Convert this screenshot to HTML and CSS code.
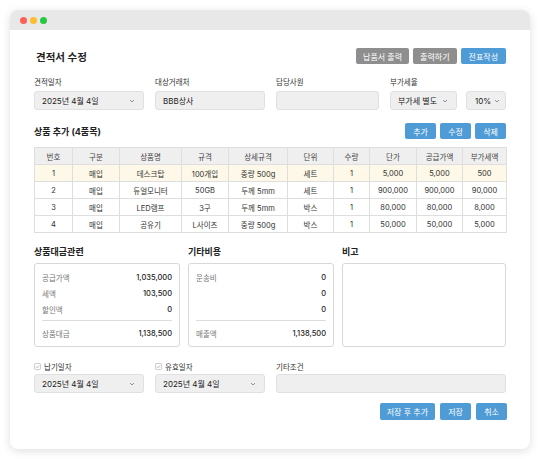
FILE: index.html
```html
<!DOCTYPE html>
<html lang="ko">
  <head>
    <meta charset="UTF-8" />
    <meta name="viewport" content="width=device-width, initial-scale=1.0" />
    <title>견적서 수정</title>
    <link rel="stylesheet" href="styles.css">
  </head>
  <body>
    <div class="window">
      <div class="titlebar">
        <span class="light red"></span>
        <span class="light yellow"></span>
        <span class="light green"></span>
      </div>

      <div class="content">
        <div class="head-row">
          <h1>견적서 수정</h1>
          <div class="btns">
            <button class="btn gray">납품서 출력</button>
            <button class="btn gray">출력하기</button>
            <button class="btn blue">전표작성</button>
          </div>
        </div>

        <div class="fields">
          <div class="field">
            <label>견적일자</label>
            <div class="input select">2025년 4월 4일<svg class="chev" viewBox="0 0 6 4"><path d="M1 1l2 2 2-2" /></svg></div>
          </div>
          <div class="field">
            <label>대상거래처</label>
            <div class="input">BBB상사</div>
          </div>
          <div class="field">
            <label>담당사원</label>
            <div class="input"></div>
          </div>
          <div class="field">
            <label>부가세율</label>
            <div class="vat">
              <div class="input select">부가세 별도<svg class="chev" viewBox="0 0 6 4"><path d="M1 1l2 2 2-2" /></svg></div>
              <div class="input select">10%<svg class="chev" viewBox="0 0 6 4"><path d="M1 1l2 2 2-2" /></svg></div>
            </div>
          </div>
        </div>

        <div class="section-row">
          <h2>상품 추가 (4품목)</h2>
          <div class="btns">
            <button class="btn blue">추가</button>
            <button class="btn blue">수정</button>
            <button class="btn blue">삭제</button>
          </div>
        </div>

        <table class="items">
          <colgroup>
            <col style="width:38px"><col style="width:47px"><col style="width:62px"><col style="width:47px"><col style="width:59px">
            <col style="width:46px"><col style="width:36px"><col style="width:47px"><col style="width:46px"><col>
          </colgroup>
          <thead>
            <tr><th>번호</th><th>구분</th><th>상품명</th><th>규격</th><th>상세규격</th><th>단위</th><th>수량</th><th>단가</th><th>공급가액</th><th>부가세액</th></tr>
          </thead>
          <tbody>
            <tr class="selected"><td>1</td><td>매입</td><td>데스크탑</td><td>100개입</td><td>중량 500g</td><td>세트</td><td>1</td><td>5,000</td><td>5,000</td><td>500</td></tr>
            <tr><td>2</td><td>매입</td><td>듀얼모니터</td><td>50GB</td><td>두께 5mm</td><td>세트</td><td>1</td><td>900,000</td><td>900,000</td><td>90,000</td></tr>
            <tr><td>3</td><td>매입</td><td>LED램프</td><td>3구</td><td>두께 5mm</td><td>박스</td><td>1</td><td>80,000</td><td>80,000</td><td>8,000</td></tr>
            <tr><td>4</td><td>매입</td><td>공유기</td><td>L사이즈</td><td>중량 500g</td><td>박스</td><td>1</td><td>50,000</td><td>50,000</td><td>5,000</td></tr>
          </tbody>
        </table>

        <div class="summary">
          <div class="panel">
            <h2>상품대금관련</h2>
            <div class="box">
              <div class="line"><span>공급가액</span><b>1,035,000</b></div>
              <div class="line"><span>세액</span><b>103,500</b></div>
              <div class="line"><span>할인액</span><b>0</b></div>
              <hr>
              <div class="line"><span>상품대금</span><b>1,138,500</b></div>
            </div>
          </div>
          <div class="panel">
            <h2>기타비용</h2>
            <div class="box">
              <div class="line"><span>운송비</span><b>0</b></div>
              <div class="line"><span></span><b>0</b></div>
              <div class="line"><span></span><b>0</b></div>
              <hr>
              <div class="line"><span>매출액</span><b>1,138,500</b></div>
            </div>
          </div>
          <div class="panel">
            <h2>비고</h2>
            <div class="box memo"></div>
          </div>
        </div>

        <div class="fields bottom">
          <div class="field">
            <label class="check"><svg class="box-icon" viewBox="0 0 8 8"><rect x="0.5" y="0.5" width="7" height="7" rx="1.5" /><path d="M2.2 4.1l1.3 1.3 2.4-2.6" /></svg>납기일자</label>
            <div class="input select">2025년 4월 4일<svg class="chev" viewBox="0 0 6 4"><path d="M1 1l2 2 2-2" /></svg></div>
          </div>
          <div class="field">
            <label class="check"><svg class="box-icon" viewBox="0 0 8 8"><rect x="0.5" y="0.5" width="7" height="7" rx="1.5" /><path d="M2.2 4.1l1.3 1.3 2.4-2.6" /></svg>유효일자</label>
            <div class="input select">2025년 4월 4일<svg class="chev" viewBox="0 0 6 4"><path d="M1 1l2 2 2-2" /></svg></div>
          </div>
          <div class="field wide">
            <label>기타조건</label>
            <div class="input"></div>
          </div>
        </div>

        <div class="footer">
          <button class="btn blue">저장 후 추가</button>
          <button class="btn blue">저장</button>
          <button class="btn blue">취소</button>
        </div>
      </div>
    </div>
  </body>
</html>
```

FILE: styles.css
```css
* {
  box-sizing: border-box;
}
body {
  margin: 0;
  background: #fff;
  font-family: "Inter", "Noto Sans CJK KR", sans-serif;
  color: #222;
}
.window {
  margin: 10px;
  width: 520px;
  height: 439px;
  border-radius: 8px;
  background: #fff;
  box-shadow: 0 2px 10px rgba(0, 0, 0, 0.13);
  overflow: hidden;
}
.titlebar {
  height: 20px;
  background: #e8e8e8;
  display: flex;
  align-items: center;
  gap: 3px;
  padding-left: 10px;
}
.light {
  width: 7px;
  height: 7px;
  border-radius: 50%;
}
.red { background: #fe5f57; }
.yellow { background: #febc2e; }
.green { background: #28c840; }

.content {
  padding: 18px 24px 0;
}
.head-row,
.section-row {
  display: flex;
  justify-content: space-between;
  align-items: center;
  height: 16px;
}
h1 {
  margin: 0 0 0 2px;
  font-size: 10.5px;
  font-weight: 700;
}
h2 {
  margin: 0;
  font-size: 9px;
  font-weight: 700;
}
.btns {
  display: flex;
  gap: 4px;
}
.btn {
  border: 0;
  border-radius: 2px;
  height: 16px;
  padding: 0 7px;
  font-family: inherit;
  font-size: 8px;
  color: #fff;
}
.btn.gray { background: #8e8e8e; }
.btn.blue { background: #4f9bd6; min-width: 31px; }
.head-row .btn.blue { padding: 0 8px; }

.fields {
  display: grid;
  grid-template-columns: 110px 110px 103px 1fr;
  column-gap: 11px;
  margin-top: 12px;
}
.field label {
  display: flex;
  align-items: center;
  height: 10px;
  font-size: 7.5px;
  color: #333;
  margin-bottom: 5px;
}
.input {
  height: 19px;
  background: #efefef;
  border: 1px solid #e0e0e0;
  border-radius: 3px;
  display: flex;
  align-items: center;
  justify-content: space-between;
  padding: 0 8px 0 7px;
  font-size: 8px;
  color: #222;
}
.chev {
  width: 6px;
  height: 4px;
  fill: none;
  stroke: #777;
  stroke-width: 0.8;
}
.vat {
  display: flex;
  gap: 9px;
}
.vat .input:first-child {
  width: 67px;
}
.vat .input:last-child {
  flex: 1;
  padding: 0 5px 0 8px;
}

.section-row {
  margin-top: 13px;
}
.items {
  margin-top: 8px;
  width: 473px;
  border-collapse: collapse;
  table-layout: fixed;
  font-size: 7.5px;
  border: 1px solid #d8d8d8;
}
.items th,
.items td {
  height: 17px;
  padding: 0;
  text-align: center;
  border: 1px solid #dedede;
  color: #333;
  font-weight: 400;
}
.items th {
  background: #efefef;
  color: #444;
}
.items .selected td {
  background: #fdf8e7;
}

.summary {
  display: grid;
  grid-template-columns: 146px 146px 1fr;
  column-gap: 8px;
  margin-top: 13px;
}
.panel h2 {
  height: 12px;
  line-height: 12px;
  margin-bottom: 5px;
}
.box {
  height: 84px;
  border: 1px solid #d8d8d8;
  border-radius: 3px;
  padding: 5px 7px 0;
}
.line {
  display: flex;
  justify-content: space-between;
  height: 16px;
  align-items: center;
  font-size: 7.5px;
}
.line span {
  color: #777;
}
.line b {
  font-weight: 500;
  color: #222;
}
.box hr {
  border: 0;
  border-top: 1px solid #dcdcdc;
  margin: 3px 0 4px;
}

.fields.bottom {
  grid-template-columns: 110px 110px 1fr;
  margin-top: 14px;
}
.fields.bottom .field label {
  margin-bottom: 3px;
}
.check {
  gap: 3px;
}
.box-icon {
  width: 7px;
  height: 7px;
  fill: #fff;
  stroke: #aaa;
  stroke-width: 0.7;
}
.box-icon path {
  fill: none;
  stroke: #888;
}
.footer {
  display: flex;
  justify-content: flex-end;
  gap: 5px;
  margin-top: 10px;
  margin-right: -1px;
}
.footer .btn {
  height: 17px;
}
```
